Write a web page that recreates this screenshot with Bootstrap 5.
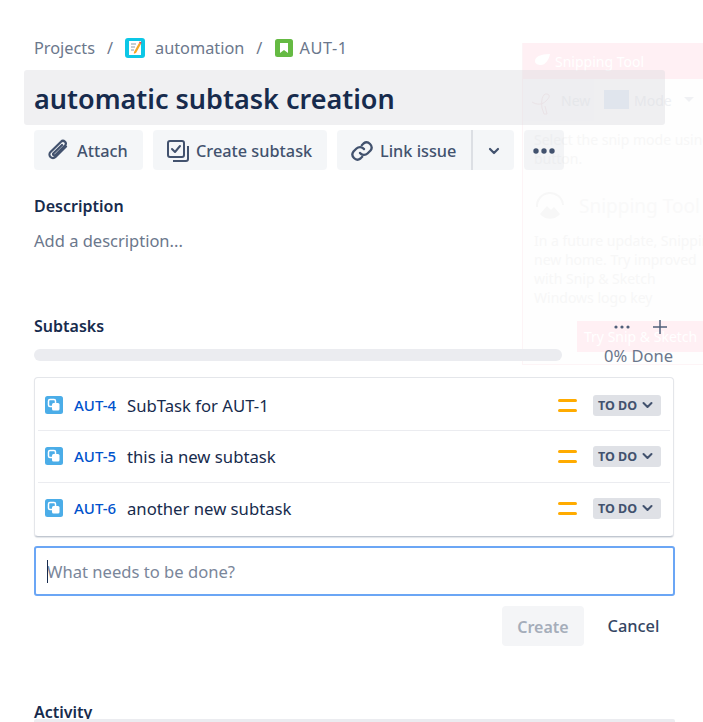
<!DOCTYPE html>
<html lang="en">
<head>
<meta charset="utf-8">
<title>AUT-1</title>
<link rel="stylesheet" href="https://cdn.jsdelivr.net/npm/bootstrap@5.3.0/dist/css/bootstrap.min.css">
<style>
html,body{height:722px;overflow:hidden;background:#fff}
body{font-family:"Noto Sans","Open Sans",sans-serif;color:#172b4d;position:relative;font-size:16px}
.ghost{position:absolute;left:522px;top:43px;width:181px;height:322px;border-left:1px solid #fdf4f6;border-bottom:1px solid #fdf4f6;background:#fefefe;color:#f8f8f8;overflow:hidden;white-space:nowrap}
.ghost-title{height:36px;background:#fff0f4;color:#fff;font-size:14px;padding:8px 0 0 32px}
.ghost-title-ico{position:absolute;left:11px;top:10px}
.ghost-new{position:absolute;left:0;top:36px;width:71px;height:42px;background:#fcfcfd}
.ghost-new-ico{position:absolute;left:7px;top:49px}
.ghost-tool{position:absolute;top:47px;font-size:14px;color:#eef0f3}
.ghost-mode{position:absolute;left:81px;top:47px;width:25px;height:19px;background:#e6edf7}
.ghost-caret{position:absolute;left:161px;top:54px;width:0;height:0;border:5px solid transparent;border-top:5px solid #f0f1f4;border-bottom:0}
.ghost-p{position:absolute;left:11px;font-size:14px;line-height:19px;color:#f7f7f7}
.ghost-h{position:absolute;left:56px;top:149px;font-size:19px;color:#f9f9f9}
.ghost-btn{position:absolute;left:54px;top:278px;width:127px;height:31px;background:#fff0f4;color:#fff;font-size:14px;padding:5px 0 0 7px}
.ghost-ico{position:absolute;left:12px;top:148px}
.sheet{position:relative;z-index:1;width:703px;height:722px;padding:0 28px 0 34px}
.crumbs{height:70px;padding-top:26px;font-size:16.300px;line-height:24px;color:#6b778c}
.crumbs .sep{margin:0 12px}
.crumbs .sep-b{margin-right:13px}
.tile{width:20px;height:20px;flex:none}
.tile-a{margin-right:10px}
.tile-b{width:18px;height:18px;margin-right:6px}
.crumb-key{letter-spacing:.6px}
.title-band{margin-left:-10px;width:641px;height:55px;border-radius:3px;background:rgba(215,215,222,.38);padding-left:10px;font-size:27px;font-weight:600;line-height:57px;color:#172b4d;white-space:nowrap}
.acts{margin-top:5px;height:40px;gap:10px}
.act{height:40px;border-radius:4px;background:rgba(240,242,245,.72);color:#42526e;font-size:16.300px;font-weight:500;border:0;padding:1px 0 0;line-height:40px;white-space:nowrap}
.act-attach{width:109px;padding-left:12px}
.act-attach svg{margin-right:7px}
.act-sub{width:174px;padding-left:13px}
.act-sub svg{margin-right:6px}
.act-link{width:136px;padding-left:13px;border-radius:4px 0 0 4px;border-right:2px solid #dcdfe4}
.act-link svg{margin-right:6px}
.act-split{width:41px;border-radius:0 4px 4px 0;justify-content:center}
.act-more{width:40px;justify-content:center;background:rgba(200,205,215,.2)}
.act-group{gap:0}
.sect{font-size:16px;font-weight:600;line-height:22px;color:#172b4d}
.desc-h{margin-top:25px}
.desc-add{margin-top:12px;font-size:16.500px;line-height:24px;color:#6b778c}
.sub-head{margin-top:61px;height:24px;width:641px}
.sub-tools{width:54px;margin-right:7px;color:#505f79;margin-top:2px}
.prog{height:26px;width:641px}
.prog-track{width:528px;height:12px;border-radius:6px;background:#ebecf0;margin-top:8px}
.prog-lab{font-size:16.500px;line-height:18px;color:#6b778c;margin-left:auto;margin-right:2px;margin-top:9px}
.sub-card{width:640px;height:160px;margin-top:13px;border:1px solid #e4e6ea;border-bottom-color:#c1c7d0;border-radius:4px;box-shadow:0 1px 1px rgba(9,30,66,.12);padding:2px 3px;background:#fff}
.sub-row{height:51.500px;border-width:0 0 1px;border-style:solid;border-color:#ebecf0;border-radius:0;padding:0 9px 0 7px;background:transparent;font-size:16.700px;color:#172b4d}
.sub-row:last-child{border-bottom-width:0}
.sub-key{font-size:15px;font-weight:500;color:#0052cc;margin-left:11px;margin-right:9px;width:44px;white-space:nowrap}
.prio{margin-left:auto;margin-right:16px}
.todo{width:68px;height:21px;border-radius:3px;background:#dfe1e6;color:#42526e;font-size:12.500px;font-weight:700;line-height:21px;padding-left:5px;gap:5px}
.input-wrap{width:641px;margin-top:9px;height:50px}
.new-input{width:641px;height:50px;border:2px solid #6ba6f5;border-radius:3px;padding:0 11px 0 11px;font-size:16.600px;color:#172b4d;box-shadow:none}
.new-input::placeholder{color:#7a869a}
.caret-bar{position:absolute;left:13px;top:14px;width:1px;height:23px;background:#172b4d}
.form-btns{width:641px;margin-top:10px;height:40px}
.btn.btn-create:disabled{width:82px;height:40px;background:#f4f5f7;color:#a5adba;font-weight:600;font-size:16px;border:0;border-radius:4px;padding:1px 0 0 0;opacity:1;margin-left:-1px}
.btn.btn-cancel{width:77px;margin-left:14px;height:40px;background:transparent;color:#344563;font-weight:500;font-size:16.400px;border:0;padding:1px 6px 0 0;text-align:center}
.act-h{margin-top:55px;line-height:22px}
.act-line{position:relative;width:641px;height:4px;background:#ebecf0;border-radius:2px 2px 0 0;margin-top:-4px}
</style>
</head>
<body>
<div class="ghost" aria-hidden="true">
  <div class="ghost-title">Snipping Tool</div>
  <svg class="ghost-title-ico" width="17" height="14" viewBox="0 0 17 14"><path d="M1 8c0-4 5-7 15-7-1 6-5 11-9 11-3 0-6-1-6-4z" fill="#fff"/></svg>
  <div class="ghost-new"></div>
  <svg class="ghost-new-ico" width="26" height="26" viewBox="0 0 26 26" fill="none" stroke="#f5e9ec"><path d="M2 10c5 3 10 3 14-1 3-3 5-6 1-7-5-1-6 8-5 14M12 16l2 6 3 0-2-8"/></svg>
  <div class="ghost-tool" style="left:38px">New</div>
  <div class="ghost-mode"></div>
  <div class="ghost-tool" style="left:111px">Mode</div>
  <div class="ghost-caret"></div>
  <div class="ghost-p" style="top:87px">Select the snip mode using<br>button.</div>
  <svg class="ghost-ico" width="30" height="28" viewBox="0 0 30 28"><path d="M2 16a13 13 0 0 1 26-2" fill="none" stroke="#f7f7f7" stroke-width="2"/><path d="M5 23l7-8 4 4 3-3 6 7a13 13 0 0 1-20 0z" fill="#f7f7f7"/></svg>
  <div class="ghost-h">Snipping Tool</div>
  <div class="ghost-p" style="top:188px">In a future update, Snipping<br>new home. Try improved<br>with Snip &amp; Sketch<br>Windows logo key</div>
  <div class="ghost-btn">Try Snip &amp; Sketch</div>
</div>
<div class="sheet">
  <div class="crumbs d-flex align-items-center">
    <span>Projects</span><span class="sep">/</span>
    <svg class="tile tile-a" viewBox="0 0 20 20"><rect width="20" height="20" rx="3" fill="#0cc7e6"/><rect x="4" y="3" width="12" height="14" fill="#fff"/><path d="M6 6h5M6 9h4M6 12h3" stroke="#8a9aa8"/><path d="M9 14l5-9 2 1-5 9-2.200.8z" fill="#f5a623"/><path d="M14 5l.7-1.400 2 1L16 6z" fill="#e5484d"/></svg>
    <span>automation</span><span class="sep sep-b">/</span>
    <svg class="tile tile-b" viewBox="0 0 18 18"><rect width="18" height="18" rx="2.500" fill="#65ba43"/><path d="M5 4h8v10l-4-3-4 3z" fill="#fff"/></svg>
    <span class="crumb-key">AUT-1</span>
  </div>
  <div class="title-band">automatic subtask creation</div>
  <div class="acts d-flex">
    <button class="act act-attach d-flex align-items-center" type="button">
      <svg width="24" height="24" viewBox="0 0 24 24" fill="none" stroke="#42526e" stroke-width="2.200" stroke-linecap="round"><path d="M20 7.500 9.500 18a3.500 3.500 0 0 1-5-5L15 2.800a2.600 2.600 0 0 1 4 3.700L9.500 16a1.200 1.200 0 0 1-2-1.800L16 6"/></svg>Attach
    </button>
    <button class="act act-sub d-flex align-items-center" type="button">
      <svg width="24" height="24" viewBox="0 0 24 24" fill="none" stroke="#42526e" stroke-width="2"><rect x="2" y="2" width="16" height="16" rx="2"/><path d="M6 10l3 3 5-6" stroke-linecap="round" stroke-linejoin="round"/><path d="M22 7v13a2 2 0 0 1-2 2H7"/></svg><span>Create subtask</span>
    </button>
    <div class="d-flex act-group">
      <button class="act act-link d-flex align-items-center" type="button">
        <svg width="24" height="24" viewBox="0 0 24 24" fill="none" stroke="#42526e" stroke-width="2.300" stroke-linecap="round"><path d="M10 14a5 5 0 0 0 7.500.5l3-3a5 5 0 0 0-7-7l-1.700 1.700"/><path d="M14 10a5 5 0 0 0-7.500-.5l-3 3a5 5 0 0 0 7 7l1.700-1.700"/></svg><span>Link issue</span>
      </button>
      <button class="act act-split d-flex align-items-center" type="button" aria-label="More link options">
        <svg width="14" height="14" viewBox="0 0 14 14" fill="none" stroke="#42526e" stroke-width="2.200" stroke-linecap="round" stroke-linejoin="round"><path d="M3 5l4 4 4-4"/></svg>
      </button>
    </div>
    <button class="act act-more d-flex align-items-center" type="button" aria-label="More actions">
      <svg width="24" height="8" viewBox="0 0 24 8" fill="#42526e"><circle cx="4" cy="4" r="2.700"/><circle cx="12" cy="4" r="2.700"/><circle cx="20" cy="4" r="2.700"/></svg>
    </button>
  </div>
  <div class="sect desc-h">Description</div>
  <div class="desc-add">Add a description...</div>
  <div class="sub-head d-flex justify-content-between align-items-center">
    <span class="sect">Subtasks</span>
    <span class="sub-tools d-flex align-items-center justify-content-between">
      <svg width="16" height="4" viewBox="0 0 16 4" fill="#505f79"><circle cx="2" cy="2" r="1.600"/><circle cx="8" cy="2" r="1.600"/><circle cx="14" cy="2" r="1.600"/></svg>
      <svg width="16" height="16" viewBox="0 0 16 16" stroke="#505f79" stroke-width="1.500"><path d="M8 1v14M1 8h14"/></svg>
    </span>
  </div>
  <div class="prog d-flex align-items-center">
    <div class="prog-track"></div>
    <div class="prog-lab">0% Done</div>
  </div>
  <ul class="list-group sub-card">
    <li class="list-group-item sub-row d-flex align-items-center">
      <svg width="18" height="18" viewBox="0 0 18 18" class="flex-shrink-0"><rect width="18" height="18" rx="2.500" fill="#4bade8"/><rect x="3.500" y="3.500" width="7" height="7" rx="1.500" fill="none" stroke="#fff" stroke-width="1.500"/><rect x="7" y="7" width="7.500" height="7.500" rx="1.500" fill="#fff"/></svg>
      <span class="sub-key">AUT-4</span><span>SubTask for AUT-1</span>
      <svg class="prio" width="19" height="13" viewBox="0 0 19 13" fill="#ffab00"><rect y="0" width="19" height="3" rx="1.500"/><rect y="10" width="19" height="3" rx="1.500"/></svg>
      <span class="todo d-flex align-items-center">TO DO<svg width="11" height="8" viewBox="0 0 11 8" fill="none" stroke="#42526e" stroke-width="2" stroke-linecap="round" stroke-linejoin="round"><path d="M1.500 2l4 4 4-4"/></svg></span>
    </li>
    <li class="list-group-item sub-row d-flex align-items-center">
      <svg width="18" height="18" viewBox="0 0 18 18" class="flex-shrink-0"><rect width="18" height="18" rx="2.500" fill="#4bade8"/><rect x="3.500" y="3.500" width="7" height="7" rx="1.500" fill="none" stroke="#fff" stroke-width="1.500"/><rect x="7" y="7" width="7.500" height="7.500" rx="1.500" fill="#fff"/></svg>
      <span class="sub-key">AUT-5</span><span>this ia new subtask</span>
      <svg class="prio" width="19" height="13" viewBox="0 0 19 13" fill="#ffab00"><rect y="0" width="19" height="3" rx="1.500"/><rect y="10" width="19" height="3" rx="1.500"/></svg>
      <span class="todo d-flex align-items-center">TO DO<svg width="11" height="8" viewBox="0 0 11 8" fill="none" stroke="#42526e" stroke-width="2" stroke-linecap="round" stroke-linejoin="round"><path d="M1.500 2l4 4 4-4"/></svg></span>
    </li>
    <li class="list-group-item sub-row d-flex align-items-center">
      <svg width="18" height="18" viewBox="0 0 18 18" class="flex-shrink-0"><rect width="18" height="18" rx="2.500" fill="#4bade8"/><rect x="3.500" y="3.500" width="7" height="7" rx="1.500" fill="none" stroke="#fff" stroke-width="1.500"/><rect x="7" y="7" width="7.500" height="7.500" rx="1.500" fill="#fff"/></svg>
      <span class="sub-key">AUT-6</span><span>another new subtask</span>
      <svg class="prio" width="19" height="13" viewBox="0 0 19 13" fill="#ffab00"><rect y="0" width="19" height="3" rx="1.500"/><rect y="10" width="19" height="3" rx="1.500"/></svg>
      <span class="todo d-flex align-items-center">TO DO<svg width="11" height="8" viewBox="0 0 11 8" fill="none" stroke="#42526e" stroke-width="2" stroke-linecap="round" stroke-linejoin="round"><path d="M1.500 2l4 4 4-4"/></svg></span>
    </li>
  </ul>
  <div class="input-wrap position-relative">
    <input class="form-control new-input" type="text" placeholder="What needs to be done?">
    <div class="caret-bar"></div>
  </div>
  <div class="form-btns d-flex justify-content-end">
    <button class="btn btn-create" type="button" disabled>Create</button>
    <button class="btn btn-cancel" type="button">Cancel</button>
  </div>
  <div class="sect act-h">Activity</div>
  <div class="act-line"></div>
</div>
</body>
</html>
